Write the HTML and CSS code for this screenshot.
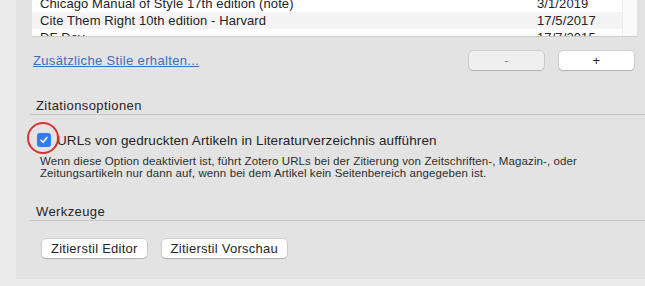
FILE: index.html
```html
<!DOCTYPE html>
<html lang="de">
<head>
  <meta charset="UTF-8" />
  <title>Zotero Einstellungen - Zitieren</title>
  <link rel="stylesheet" href="styles.css">
</head>
<body>

<section class="panel">

  <div class="style-list">
    <div class="rows">
      <div class="row"><span class="name">Chicago Manual of Style 17th edition (note)</span><span class="date">3/1/2019</span></div>
      <div class="row alt"><span class="name">Cite Them Right 10th edition - Harvard</span><span class="date">17/5/2017</span></div>
      <div class="row"><span class="name">DF Dev</span><span class="date">17/7/2015</span></div>
    </div>
    <div class="scroll-track"></div>
  </div>

  <div class="list-actions">
    <a href="#" class="more-link">Zusätzliche Stile erhalten...</a>
    <div class="pm-buttons">
      <button class="mac-btn disabled">-</button>
      <button class="mac-btn">+</button>
    </div>
  </div>

  <h2 class="group-title">Zitationsoptionen</h2>

  <label class="check-row">
    <span class="checkbox">
      <svg width="10" height="10" viewBox="0 0 10 10"><path d="M2 5.2 L4.1 7.3 L8 2.6" fill="none" stroke="#fff" stroke-width="1.6" stroke-linecap="round" stroke-linejoin="round"/></svg>
    </span>
    URLs von gedruckten Artikeln in Literaturverzeichnis aufführen
    <span class="ring"></span>
  </label>
  <p class="hint">Wenn diese Option deaktiviert ist, führt Zotero URLs bei der Zitierung von Zeitschriften-, Magazin-, oder Zeitungsartikeln nur dann auf, wenn bei dem Artikel kein Seitenbereich angegeben ist.</p>

  <h2 class="group-title tools">Werkzeuge</h2>

  <div class="tool-buttons">
    <button class="mac-btn">Zitierstil Editor</button>
    <button class="mac-btn">Zitierstil Vorschau</button>
  </div>

</section>

</body>
</html>
```

FILE: styles.css
```css
* {
  margin: 0;
  padding: 0;
  box-sizing: border-box;
  font-family: 'Liberation Sans', Arial, sans-serif;
}

body {
  background: #ececec;
  color: #232323;
  overflow: hidden;
}

.panel {
  margin-left: 16px;
  height: 279px;
  background: #e3e3e3;
  padding: 0 8px 0 14px;
}

/* style list, scrolled part way */
.style-list {
  position: relative;
  margin-left: 2px;
  height: 37px;
  background: #fff;
  border-bottom: 1px solid #cbcbcb;
  overflow: hidden;
}

.rows {
  margin-top: -5px;
  margin-right: 15px;
}

.row {
  display: flex;
  height: 17px;
  align-items: center;
  padding-left: 8px;
  font-size: 13px;
  letter-spacing: 0.1px;
}

.row.alt {
  background: #f4f4f4;
}

.row .name {
  width: 497px;
}

.scroll-track {
  position: absolute;
  top: 0;
  right: 0;
  width: 15px;
  height: 100%;
  background: #fafafa;
  border-left: 1px solid #ededed;
}

.list-actions {
  display: flex;
  align-items: center;
  justify-content: space-between;
  margin-top: 14px;
  padding-left: 3px;
}

.more-link {
  font-size: 13px;
  letter-spacing: 0.35px;
  color: #3d6dc2;
}

.pm-buttons {
  display: flex;
  gap: 15px;
  margin-right: 3px;
}

.pm-buttons .mac-btn {
  width: 75px;
}

.mac-btn {
  height: 19px;
  padding: 0 9px;
  font-size: 13px;
  letter-spacing: 0.25px;
  color: #262626;
  background: #fff;
  border: none;
  border-radius: 4px;
  box-shadow: 0 0 0 0.5px rgba(0, 0, 0, 0.18), 0 1px 1px rgba(0, 0, 0, 0.14);
}

.mac-btn.disabled {
  background: #efefef;
  color: #8a8a8a;
}

.group-title {
  margin-top: 27px;
  margin-right: -8px;
  height: 18px;
  line-height: 17px;
  padding-left: 6px;
  font-size: 13px;
  letter-spacing: 0.4px;
  font-weight: normal;
  color: #262626;
  border-bottom: 1px solid #c6c6c6;
}

.group-title.tools {
  margin-top: 24px;
}

.check-row {
  position: relative;
  display: flex;
  align-items: center;
  gap: 6px;
  margin-top: 17px;
  padding-left: 7px;
  height: 16px;
  font-size: 13.5px;
  letter-spacing: 0.1px;
}

.checkbox {
  display: flex;
  align-items: center;
  justify-content: center;
  width: 14px;
  height: 14px;
  border-radius: 3px;
  background: #2f7df6;
}

/* red annotation ring */
.ring {
  position: absolute;
  left: -3px;
  top: -10px;
  width: 32px;
  height: 32px;
  border: 2.5px solid #d8342c;
  border-radius: 50%;
}

.hint {
  margin-top: 7px;
  padding-left: 10px;
  font-size: 11.5px;
  line-height: 12px;
  letter-spacing: 0.1px;
  color: #2e2e2e;
  width: 590px;
}

.tool-buttons {
  display: flex;
  gap: 15px;
  margin-top: 18px;
  padding-left: 12px;
}
```
